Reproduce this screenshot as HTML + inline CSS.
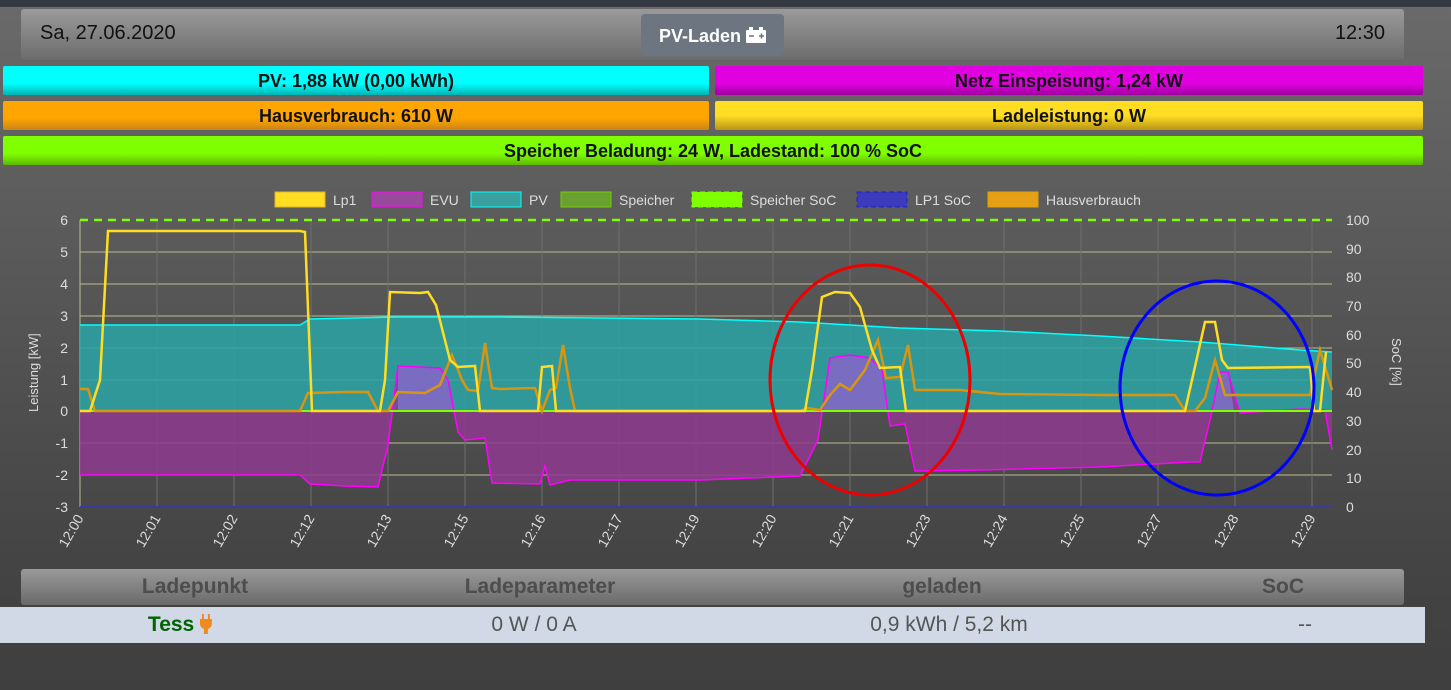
<!DOCTYPE html>
<html><head><meta charset="utf-8"><style>
body{margin:0;width:1451px;height:690px;overflow:hidden;background:linear-gradient(#6a6a6a 0px,#5e5e5e 180px,#444 560px,#3f3f3f 690px);font-family:"Liberation Sans",sans-serif;position:relative}
.top{position:absolute;left:0;top:0;width:1451px;height:7px;background:#353a42}
.hdr{position:absolute;left:21px;top:9px;width:1383px;height:51px;background:linear-gradient(#9a9a9a,#6c6c6c);border-radius:3px}
.hdr .d{position:absolute;left:19px;top:13px;font-size:20px;color:#111}
.hdr .t{position:absolute;right:19px;top:13px;font-size:20px;color:#111}
.btn{position:absolute;left:641px;top:14px;width:143px;height:42px;background:#6c7580;border-radius:4px;color:#fff;font-weight:bold;font-size:18px;line-height:44px;text-align:center}
.bar{position:absolute;height:29px;border-radius:2px;text-align:center;font-weight:bold;font-size:18px;line-height:31px;color:#111}
.th{position:absolute;left:21px;top:569px;width:1383px;height:36px;background:linear-gradient(#9a9a9a,#6a6a6a);border-radius:3px;font-weight:bold;font-size:21px;color:#4d4d4d}
.th span,.tr span{position:absolute;top:6px;transform:translateX(-50%);white-space:nowrap}
.tr{position:absolute;left:0;top:607px;width:1425px;height:36px;background:#d1d9e6;font-size:21px;color:#555}
</style></head><body>
<div class="top"></div>
<div class="hdr"><div class="d">Sa, 27.06.2020</div><div class="t">12:30</div></div>
<div class="btn">PV-Laden <svg width="20" height="16" viewBox="0 0 20 16" style="vertical-align:-1px"><rect x="3" y="0" width="4" height="3" fill="#fff"/><rect x="13" y="0" width="4" height="3" fill="#fff"/><rect x="0" y="3" width="20" height="13" rx="1" fill="#fff"/><path d="M3 9h5M13 9h5M15.5 6.5v5" stroke="#6c7580" stroke-width="1.6"/></svg></div>
<div class="bar" style="left:3px;top:66px;width:706px;background:linear-gradient(#00ffff 60%,#00b3b3)">PV: 1,88 kW (0,00 kWh)</div>
<div class="bar" style="left:715px;top:66px;width:708px;background:linear-gradient(#e000e0 60%,#a000a0)">Netz Einspeisung: 1,24 kW</div>
<div class="bar" style="left:3px;top:101px;width:706px;background:linear-gradient(#ffa500 60%,#c88418)">Hausverbrauch: 610 W</div>
<div class="bar" style="left:715px;top:101px;width:708px;background:linear-gradient(#ffdd22 50%,#b89418)">Ladeleistung: 0 W</div>
<div class="bar" style="left:3px;top:136px;width:1420px;background:linear-gradient(#80ff00 60%,#5cb800)">Speicher Beladung: 24 W, Ladestand: 100 % SoC</div>

<svg style="position:absolute;left:0;top:180px" width="1451" height="390" viewBox="0 180 1451 390" font-family="Liberation Sans" font-size="13" fill="#ddd">
<g font-size="14">
<rect x="275" y="192" width="50" height="15" fill="#ffdd22" stroke="#e0b820"/><text x="333" y="205">Lp1</text>
<rect x="372" y="192" width="50" height="15" fill="#9a4a9a" stroke="#f0f"/><text x="430" y="205">EVU</text>
<rect x="471" y="192" width="50" height="15" fill="#3a9f9f" stroke="#0ff"/><text x="529" y="205">PV</text>
<rect x="561" y="192" width="50" height="15" fill="#6aa030" stroke="#7c0"/><text x="619" y="205">Speicher</text>
<rect x="692" y="192" width="50" height="15" fill="#7fff00" stroke="#7fff00" stroke-dasharray="5 3"/><text x="750" y="205">Speicher SoC</text>
<rect x="857" y="192" width="50" height="15" fill="#3b3bbb" stroke="#22c" stroke-dasharray="5 3"/><text x="915" y="205">LP1 SoC</text>
<rect x="988" y="192" width="50" height="15" fill="#e6a018" stroke="#e0a000"/><text x="1046" y="205">Hausverbrauch</text>
</g>
<g stroke="#bdbd8f" stroke-width="1">
<path d="M80 252H1332M80 284H1332M80 316H1332M80 348H1332M80 380H1332M80 443H1332M80 475H1332"/>
<path d="M80 220V507"/>
</g>
<g stroke="#6e6e6e" stroke-width="1"><path d="M157 220V507M234 220V507M311 220V507M388 220V507M465 220V507M542 220V507M619 220V507M696 220V507M773 220V507M850 220V507M927 220V507M1004 220V507M1081 220V507M1158 220V507M1235 220V507M1312 220V507"/></g>
<path d="M80 325L300 325L310 319L400 317L500 317L600 318L700 319L800 322L900 328L1000 331L1100 336L1200 342L1300 350L1332 352L1332 411L80 411Z" fill="#2aa5a5" fill-opacity="0.85"/>
<path d="M80 325L300 325L310 319L400 317L500 317L600 318L700 319L800 322L900 328L1000 331L1100 336L1200 342L1300 350L1332 352" fill="none" stroke="#0ff" stroke-width="1.5"/>
<path d="M80 411L80 475L300 475L310 484L345 486L378 487L388 445L398 366L440 368L448 380L458 432L465 440L485 438L492 483L540 484L545 466L550 485L570 480L700 480L800 476L818 440L830 358L850 355L870 358L882 370L890 426L905 424L915 471L980 470L1100 467L1190 462L1200 462L1210 420L1220 372L1228 372L1240 413L1300 409L1325 410L1332 450L1332 411Z" fill="#8e3a8e" fill-opacity="0.85"/>
<path d="M398 366L440 368L448 380L456 411L398 411ZM830 358L850 355L870 358L882 370L888 411L822 411ZM1212 411L1220 372L1228 372L1234 411Z" fill="#7a6cc0"/>
<path d="M80 475L300 475L310 484L345 486L378 487L388 445L398 366L440 368L448 380L458 432L465 440L485 438L492 483L540 484L545 466L550 485L570 480L700 480L800 476L818 440L830 358L850 355L870 358L882 370L890 426L905 424L915 471L980 470L1100 467L1190 462L1200 462L1210 420L1220 372L1228 372L1240 413L1300 409L1325 410L1332 450" fill="none" stroke="#f0f" stroke-width="1.5"/>
<path d="M80 411H1332" stroke="#7fff00" stroke-width="2"/>
<path d="M80 220H1332" stroke="#7fff00" stroke-width="2.5" stroke-dasharray="8 6"/>
<path d="M80 507H1332" stroke="#3a3aa0" stroke-width="2"/>
<path d="M80 389L88 389L95 411L300 411L308 393L345 392L368 392L378 411L388 411L398 392L425 393L440 385L452 355L462 380L468 390L478 391L485 343L492 388L500 389L535 388L542 411L550 390L556 388L563 345L570 388L575 411L800 411L808 408L820 410L830 395L840 384L850 390L865 370L878 340L886 378L900 377L908 345L915 390L960 390L1000 394L1100 395L1175 395L1185 411L1195 411L1205 398L1215 360L1225 395L1280 395L1310 395L1320 350L1332 390" fill="none" stroke="#d8960e" stroke-width="2.5"/>
<path d="M80 411L90 411L100 380L108 231L300 231L305 232L312 411L380 411L385 380L390 292L420 293L428 292L436 305L450 360L458 367L475 366L480 411L538 411L542 367L552 366L556 411L800 411L805 411L812 370L822 297L835 292L850 293L860 307L872 350L880 368L900 367L906 411L1185 411L1192 380L1205 322L1215 322L1222 360L1228 368L1310 367L1314 411L1320 411L1326 352" fill="none" stroke="#ffdd22" stroke-width="2.5"/>
<ellipse cx="870" cy="380" rx="100" ry="115" fill="none" stroke="#e00" stroke-width="3"/>
<ellipse cx="1217" cy="388" rx="97" ry="107" fill="none" stroke="#00f" stroke-width="3"/>
<g font-size="14" text-anchor="end">
<text x="68" y="225">6</text><text x="68" y="257">5</text><text x="68" y="289">4</text><text x="68" y="321">3</text><text x="68" y="353">2</text><text x="68" y="385">1</text><text x="68" y="416">0</text><text x="68" y="448">-1</text><text x="68" y="480">-2</text><text x="68" y="512">-3</text>
</g>
<g font-size="14">
<text x="1346" y="225">100</text><text x="1346" y="254">90</text><text x="1346" y="282">80</text><text x="1346" y="311">70</text><text x="1346" y="340">60</text><text x="1346" y="368">50</text><text x="1346" y="397">40</text><text x="1346" y="426">30</text><text x="1346" y="455">20</text><text x="1346" y="483">10</text><text x="1346" y="512">0</text>
</g>
<text transform="translate(38,412) rotate(-90)" font-size="13">Leistung [kW]</text>
<text transform="translate(1392,338) rotate(90)" font-size="13">SoC [%]</text>
<g font-size="14" text-anchor="end">
<text transform="translate(84,518) rotate(-60)">12:00</text><text transform="translate(161,518) rotate(-60)">12:01</text><text transform="translate(238,518) rotate(-60)">12:02</text><text transform="translate(315,518) rotate(-60)">12:12</text><text transform="translate(392,518) rotate(-60)">12:13</text><text transform="translate(469,518) rotate(-60)">12:15</text><text transform="translate(546,518) rotate(-60)">12:16</text><text transform="translate(623,518) rotate(-60)">12:17</text><text transform="translate(700,518) rotate(-60)">12:19</text><text transform="translate(777,518) rotate(-60)">12:20</text><text transform="translate(854,518) rotate(-60)">12:21</text><text transform="translate(931,518) rotate(-60)">12:23</text><text transform="translate(1008,518) rotate(-60)">12:24</text><text transform="translate(1085,518) rotate(-60)">12:25</text><text transform="translate(1162,518) rotate(-60)">12:27</text><text transform="translate(1239,518) rotate(-60)">12:28</text><text transform="translate(1316,518) rotate(-60)">12:29</text>
</g>
</svg>
<div class="th"><span style="left:174px">Ladepunkt</span><span style="left:519px">Ladeparameter</span><span style="left:921px">geladen</span><span style="left:1262px">SoC</span></div>
<div class="tr"><span style="left:180px;color:#006400;font-weight:bold">Tess <svg width="12" height="20" viewBox="0 0 12 20" style="vertical-align:-3px"><path d="M3 0v5M9 0v5" stroke="#f08a1c" stroke-width="2"/><path d="M0 5h12v5a6 6 0 0 1-4 5v5H4v-5a6 6 0 0 1-4-5z" fill="#f08a1c"/></svg></span><span style="left:534px">0 W / 0 A</span><span style="left:949px">0,9 kWh / 5,2 km</span><span style="left:1305px">--</span></div>
</body></html>
